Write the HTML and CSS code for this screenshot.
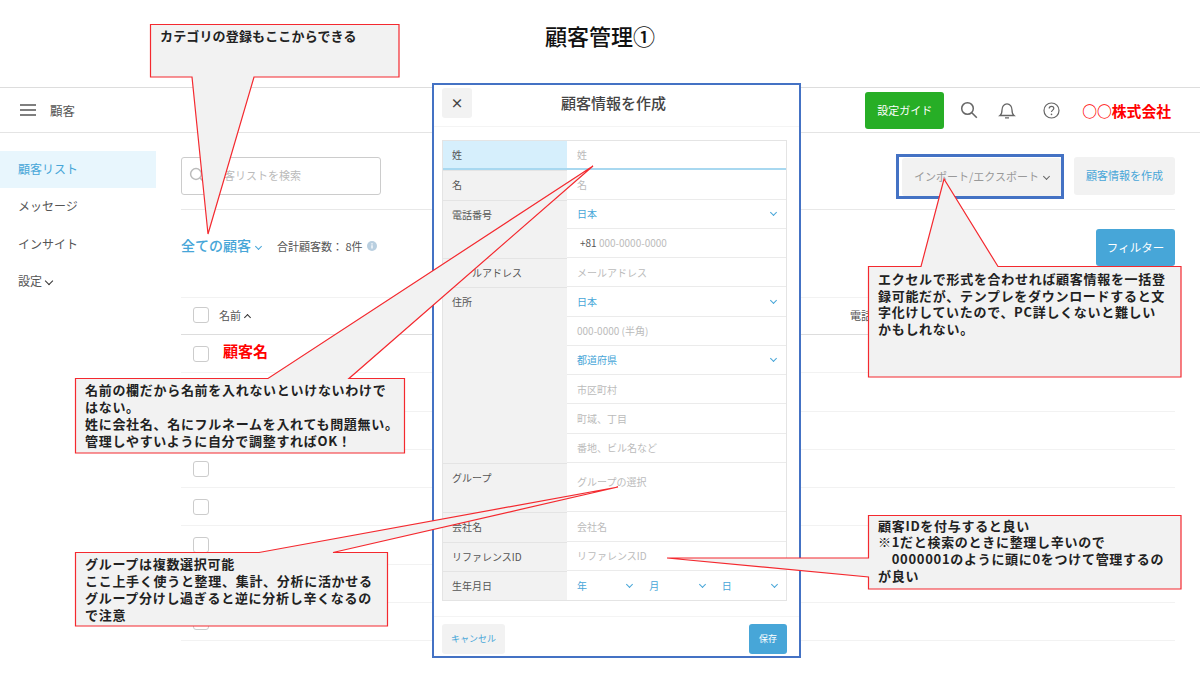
FILE: index.html
```html
<!DOCTYPE html>
<html lang="ja">
<head>
  <meta charset="UTF-8" />
  <meta name="viewport" content="width=device-width, initial-scale=1.0" />
  <title>顧客管理①</title>
  <link rel="stylesheet" href="styles.css">
</head>
<body>
  <div class="slide">
    <h1 class="slide-title">顧客管理①</h1>

    <header class="topbar">
      <svg class="menu-icon" width="16" height="12" viewBox="0 0 16 12"><path d="M0 1h16M0 6h16M0 11h16" stroke="#555" stroke-width="1.5"/></svg>
      <span class="topbar-name">顧客</span>
      <a class="guide-btn">設定ガイド</a>
      <svg class="top-icon icon-search" width="18" height="18" viewBox="0 0 18 18"><circle cx="7.5" cy="7.5" r="5.8" fill="none" stroke="#666" stroke-width="1.5"/><path d="M11.8 11.8l5 5" stroke="#666" stroke-width="1.6"/></svg>
      <svg class="top-icon icon-bell" width="18" height="18" viewBox="0 0 18 18"><path d="M2 14.5c1.6-1.2 2-2.6 2-5.5 0-3.4 2.1-6.2 5-6.2s5 2.8 5 6.2c0 2.9.4 4.3 2 5.5zM7 16.8h4" fill="none" stroke="#666" stroke-width="1.3"/></svg>
      <svg class="top-icon icon-help" width="17" height="17" viewBox="0 0 17 17"><circle cx="8.5" cy="8.5" r="7.5" fill="none" stroke="#666" stroke-width="1.2"/><path d="M6.2 6.6c0-1.4 1-2.2 2.3-2.2s2.3.8 2.3 2c0 1.7-2.3 1.8-2.3 3.6" fill="none" stroke="#666" stroke-width="1.2"/><circle cx="8.5" cy="12.4" r=".8" fill="#666"/></svg>
      <span class="company">○○株式会社</span>
    </header>

    <div class="app">
      <nav class="sidebar">
        <a class="nav-item active">顧客リスト</a>
        <a class="nav-item">メッセージ</a>
        <a class="nav-item">インサイト</a>
        <a class="nav-item">設定<i class="chev chev-dark"></i></a>
      </nav>

      <main class="content">
        <div class="toolbar">
          <div class="search">
            <svg width="16" height="16" viewBox="0 0 16 16"><circle cx="7" cy="7" r="5.4" fill="none" stroke="#bbb" stroke-width="1.5"/><path d="M11 11l4.5 4.5" stroke="#bbb" stroke-width="1.5"/></svg>
            <span>顧客リストを検索</span>
          </div>
          <div class="import-wrap"><a class="btn btn-gray">インポート/エクスポート<i class="chev chev-gray"></i></a></div>
          <a class="btn btn-create">顧客情報を作成</a>
        </div>

        <div class="filter-row">
          <span class="all-customers">全ての顧客<i class="chev chev-blue"></i></span>
          <span class="total">合計顧客数： 8件</span>
          <svg class="info-icon" width="10" height="10" viewBox="0 0 10 10"><circle cx="5" cy="5" r="5" fill="#b9cfe0"/><path d="M5 4.3v3.2M5 2.2v1.2" stroke="#fff" stroke-width="1.3"/></svg>
          <a class="btn btn-filter">フィルター</a>
        </div>

        <div class="table">
          <div class="t-row t-head"><i class="check"></i><span class="col-name">名前<i class="chev chev-up"></i></span><span class="col-phone">電話</span></div>
          <div class="t-row"><i class="check"></i><span class="customer-name">顧客名</span></div>
          <div class="t-row"><i class="check"></i></div>
          <div class="t-row"><i class="check"></i></div>
          <div class="t-row"><i class="check"></i></div>
          <div class="t-row"><i class="check"></i></div>
          <div class="t-row"><i class="check"></i></div>
          <div class="t-row"><i class="check"></i></div>
          <div class="t-row"><i class="check"></i></div>
        </div>
      </main>
    </div>

    <section class="modal">
      <div class="modal-head">
        <a class="close-btn">×</a>
        <h2>顧客情報を作成</h2>
      </div>
      <div class="form">
        <div class="f-row focus"><div class="f-label">姓</div><div class="f-fields"><div class="field ph">姓</div></div></div>
        <div class="f-row"><div class="f-label">名</div><div class="f-fields"><div class="field ph">名</div></div></div>
        <div class="f-row"><div class="f-label">電話番号</div><div class="f-fields">
          <div class="field sel">日本<i class="chev chev-blue"></i></div>
          <div class="field ph"><span class="prefix">+81</span>&nbsp;000-0000-0000</div>
        </div></div>
        <div class="f-row"><div class="f-label">メールアドレス</div><div class="f-fields"><div class="field ph">メールアドレス</div></div></div>
        <div class="f-row"><div class="f-label">住所</div><div class="f-fields">
          <div class="field sel">日本<i class="chev chev-blue"></i></div>
          <div class="field ph">000-0000 (半角)</div>
          <div class="field sel">都道府県<i class="chev chev-blue"></i></div>
          <div class="field ph">市区町村</div>
          <div class="field ph">町域、丁目</div>
          <div class="field ph">番地、ビル名など</div>
        </div></div>
        <div class="f-row"><div class="f-label">グループ</div><div class="f-fields"><div class="field ph tall">グループの選択</div></div></div>
        <div class="f-row"><div class="f-label">会社名</div><div class="f-fields"><div class="field ph">会社名</div></div></div>
        <div class="f-row"><div class="f-label">リファレンスID</div><div class="f-fields"><div class="field ph">リファレンスID</div></div></div>
        <div class="f-row"><div class="f-label">生年月日</div><div class="f-fields"><div class="field dates">
          <span class="sel">年<i class="chev chev-blue"></i></span>
          <span class="sel">月<i class="chev chev-blue"></i></span>
          <span class="sel">日<i class="chev chev-blue"></i></span>
        </div></div></div>
      </div>
      <div class="modal-foot">
        <a class="btn btn-cancel">キャンセル</a>
        <a class="btn btn-save">保存</a>
      </div>
    </section>

    <!-- callouts: shapes are one svg, text sits on top -->
    <svg class="callout-shapes" width="1200" height="675" viewBox="0 0 1200 675">
      <polygon points="150.5,24.5 399,24.5 399,77 254,77 208,234 192,77 150.5,77"/>
      <polygon points="75.5,378.5 268,378.5 593,166 349,378.5 404.5,378.5 404.5,453 75.5,453"/>
      <polygon points="75.5,552.5 259,552.5 618,487 333,552.5 387.5,552.5 387.5,626 75.5,626"/>
      <polygon points="868.5,266.5 921,266.5 944,179 998,266.5 1181,266.5 1181,377 868.5,377"/>
      <polygon points="868.5,515.5 1181,515.5 1181,589 868.5,589 868.5,577 667,558 868.5,558"/>
    </svg>
    <p class="note note-category">カテゴリの登録もここからできる</p>
    <p class="note note-name">名前の欄だから名前を入れないといけないわけで<br>はない。<br>姓に会社名、名にフルネームを入れても問題無い。<br>管理しやすいように自分で調整すればOK！</p>
    <p class="note note-group">グループは複数選択可能<br>ここ上手く使うと整理、集計、分析に活かせる<br>グループ分けし過ぎると逆に分析し辛くなるの<br>で注意</p>
    <p class="note note-excel">エクセルで形式を合わせれば顧客情報を一括登<br>録可能だが、テンプレをダウンロードすると文<br>字化けしていたので、PC詳しくないと難しい<br>かもしれない。</p>
    <p class="note note-id">顧客IDを付与すると良い<br>※1だと検索のときに整理し辛いので<br>　0000001のように頭に0をつけて管理するの<br>が良い</p>
  </div>
</body>
</html>
```

FILE: styles.css
```css
* {
  box-sizing: border-box;
}
body {
  margin: 0;
  background: #fff;
  color: #555;
  font-family: 'Noto Sans CJK JP', 'Noto Sans', sans-serif;
  font-size: 11px;
}
.slide {
  position: relative;
  width: 1200px;
  height: 675px;
  overflow: hidden;
}
.slide-title {
  margin: 0;
  height: 87px;
  padding-top: 18px;
  text-align: center;
  font-size: 22px;
  line-height: 34px;
  font-weight: 500;
  color: #111;
}

/* top bar */
.topbar {
  display: flex;
  align-items: center;
  height: 46px;
  padding: 0 29px 0 20px;
  border-top: 1px solid #ddd;
  border-bottom: 1px solid #e4e4e4;
}
.topbar-name {
  margin-left: 14px;
  font-size: 12.5px;
}
.guide-btn {
  margin-left: auto;
  width: 79px;
  height: 37px;
  background: #27ae26;
  border-radius: 3px;
  color: #fff;
  font-size: 11px;
  line-height: 36px;
  text-align: center;
}
.icon-search { margin-left: 16px; }
.icon-bell { margin-left: 20px; }
.icon-help { margin-left: 27px; }
.company {
  margin-left: 22px;
  color: #f00;
  font-size: 14.8px;
  font-weight: 700;
}

/* chevrons */
.chev {
  display: inline-block;
  width: 5px;
  height: 5px;
  margin: 0 0 2px 5px;
  border-right: 1.4px solid #333;
  border-bottom: 1.4px solid #333;
  transform: rotate(45deg);
}
.chev-gray { border-color: #666; }
.chev-blue { border-color: #47a6d8; }
.chev-dark { width: 6px; height: 6px; border-width: 1.6px; margin-left: 4px; }
.chev-up {
  margin: 3px 0 0 4px;
  transform: rotate(225deg);
}

/* sidebar + content */
.app {
  display: flex;
}
.sidebar {
  flex: 0 0 156px;
  padding-top: 18px;
}
.nav-item {
  display: block;
  height: 37.3px;
  padding-left: 18px;
  font-size: 12px;
  line-height: 36px;
}
.nav-item.active {
  background: #e8f6fd;
  color: #47a6d8;
}
.content {
  flex: 1;
  margin-left: 25px;
  padding: 24px 25px 0 0;
}
.toolbar {
  display: flex;
  align-items: center;
  height: 53px;
  padding-bottom: 14px;
  border-bottom: 1px solid #e8e8e8;
}
.search {
  display: flex;
  align-items: center;
  gap: 8px;
  width: 200px;
  height: 38px;
  padding: 0 0 2px 7px;
  border: 1px solid #ccc;
  border-radius: 3px;
  color: #bbb;
}
.btn {
  display: block;
  height: 38px;
  border-radius: 3px;
  text-align: center;
  line-height: 36px;
}
.import-wrap {
  height: 45px;
  margin: 0 10px 0 auto;
  padding: 1px 0 0 3px;
  border: 3px solid #4472c4;
}
.btn-gray {
  width: 159px;
  background: #f2f2f2;
  color: #999;
}
.btn-create {
  width: 101px;
  background: #f2f2f2;
  color: #47a6d8;
}
.filter-row {
  display: flex;
  align-items: center;
  margin-top: 19px;
  height: 37px;
}
.all-customers {
  padding-bottom: 6px;
  color: #47a6d8;
  font-size: 14px;
  font-weight: 500;
}
.total {
  margin: 0 4px 0 16px;
  padding-bottom: 4px;
}
.info-icon {
  margin-bottom: 4px;
}
.btn-filter {
  margin-left: auto;
  width: 79px;
  height: 37px;
  background: #47a6d8;
  color: #fff;
  font-size: 11.5px;
}
.table {
  margin-top: 31px;
  border-top: 1px solid #f2f2f2;
}
.t-row {
  display: flex;
  align-items: center;
  height: 38.3px;
  padding-left: 12px;
  border-bottom: 1px solid #f2f2f2;
}
.t-head {
  height: 37px;
  padding-bottom: 2px;
  border-bottom: 1px solid #ddd;
}
.check {
  width: 16px;
  height: 16px;
  border: 1.5px solid #ccc;
  border-radius: 3px;
}
.col-name {
  margin-left: 10px;
}
.col-phone {
  margin-left: 600px;
}
.customer-name {
  margin-left: 14px;
  padding-bottom: 6px;
  color: #f00;
  font-size: 15px;
  font-weight: 700;
}

/* modal */
.modal {
  position: absolute;
  left: 432px;
  top: 83px;
  width: 369px;
  height: 575px;
  display: flex;
  flex-direction: column;
  background: #fff;
  border: 2px solid #4472c4;
}
.modal-head {
  position: relative;
  height: 42px;
  border-bottom: 1px solid #f4f4f4;
}
.modal-head h2 {
  margin: 0;
  padding-right: 6px;
  text-align: center;
  font-size: 15px;
  font-weight: 500;
  line-height: 35px;
  color: #444;
}
.close-btn {
  position: absolute;
  left: 8px;
  top: 3px;
  width: 30px;
  height: 30px;
  background: #f2f2f2;
  border-radius: 3px;
  color: #444;
  font-size: 13px;
  font-weight: 700;
  line-height: 30px;
  text-align: center;
}
.form {
  margin: 13px 12px 0 8px;
  border: 1px solid #e4e4e4;
  font-size: 10px;
}
.f-row {
  display: flex;
  background: #f2f2f2;
}
.f-label {
  flex: 0 0 124px;
  padding: 7px 9px 6px;
  line-height: 14px;
}
.f-fields {
  flex: 1;
  background: #fff;
}
.field {
  display: flex;
  align-items: center;
  height: 29.25px;
  padding: 0 10px;
  border-bottom: 1px solid #ebebeb;
}
.f-row + .f-row .f-label {
  border-top: 1px solid #e4e4e4;
}
.f-row:last-child .field {
  border-bottom: 0;
}
.focus .f-label {
  padding-bottom: 5px;
  background: #d6effc;
  border-bottom: 2px solid #a8d8f0;
}
.focus .field {
  border-bottom: 2px solid #a8d8f0;
}
.ph {
  color: #bbb;
}
.prefix {
  color: #555;
  margin-left: 3px;
}
.tall {
  height: 49.5px;
  padding-bottom: 11px;
}
.sel {
  color: #47a6d8;
  justify-content: space-between;
}
.sel .chev {
  margin: 0 0 2px;
}
.dates {
  gap: 17px;
  padding-right: 9px;
}
.dates .sel {
  flex: 1;
  display: flex;
  align-items: center;
}
.modal-foot {
  display: flex;
  justify-content: space-between;
  margin-top: 15px;
  padding: 7px 12px 0 8px;
  border-top: 1px solid #f4f4f4;
}
.btn-cancel {
  width: 63px;
  height: 30px;
  line-height: 29px;
  background: #f2f2f2;
  color: #47a6d8;
  font-size: 9px;
}
.btn-save {
  width: 38px;
  height: 30px;
  line-height: 29px;
  background: #47a6d8;
  color: #fff;
  font-size: 9px;
}

/* callouts */
.callout-shapes {
  position: absolute;
  left: 0;
  top: 0;
}
.callout-shapes polygon {
  fill: #f2f2f2;
  stroke: #f4292f;
  stroke-width: 1.2;
}
.note {
  position: absolute;
  margin: 0;
  color: #222;
  font-size: 13px;
  font-weight: 700;
  letter-spacing: .7px;
  line-height: 17px;
  white-space: nowrap;
}
.note-category { left: 160px; top: 27px; letter-spacing: .15px; }
.note-name { left: 85px; top: 381px; }
.note-group { left: 85px; top: 555px; }
.note-excel { left: 878px; top: 271px; line-height: 16.7px; }
.note-id { left: 878px; top: 517.5px; line-height: 16.7px; }
```
